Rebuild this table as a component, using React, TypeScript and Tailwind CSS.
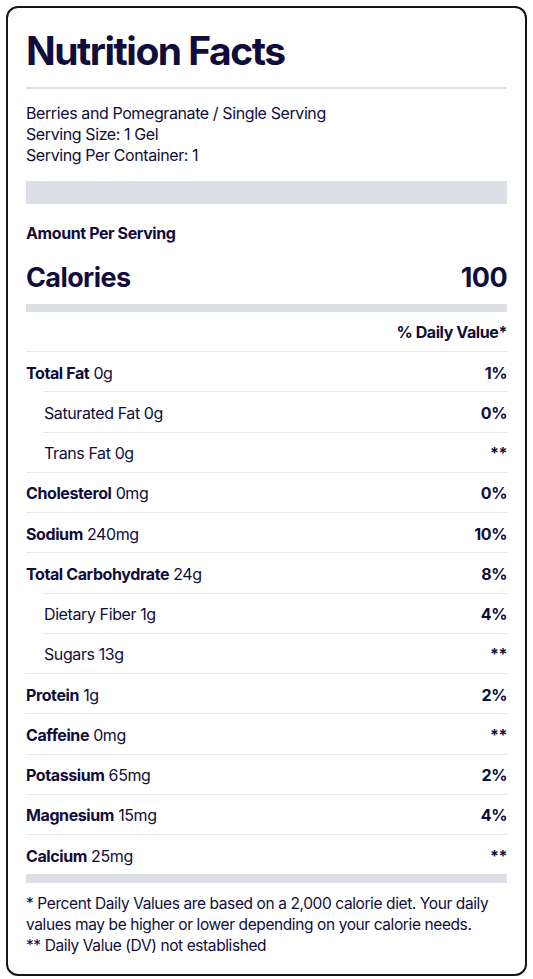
const rows: { label: string; amount: string; dv: string; sub?: boolean }[] = [
  { label: 'Total Fat', amount: '0g', dv: '1%' },
  { label: 'Saturated Fat', amount: '0g', dv: '0%', sub: true },
  { label: 'Trans Fat', amount: '0g', dv: '**', sub: true },
  { label: 'Cholesterol', amount: '0mg', dv: '0%' },
  { label: 'Sodium', amount: '240mg', dv: '10%' },
  { label: 'Total Carbohydrate', amount: '24g', dv: '8%' },
  { label: 'Dietary Fiber', amount: '1g', dv: '4%', sub: true },
  { label: 'Sugars', amount: '13g', dv: '**', sub: true },
  { label: 'Protein', amount: '1g', dv: '2%' },
  { label: 'Caffeine', amount: '0mg', dv: '**' },
  { label: 'Potassium', amount: '65mg', dv: '2%' },
  { label: 'Magnesium', amount: '15mg', dv: '4%' },
  { label: 'Calcium', amount: '25mg', dv: '**' },
];

export default function App() {
  return (
    <div className="bg-white p-[6px] font-['Inter',sans-serif] tracking-[-0.4px] text-[#100d3c]">
      <div className="rounded-[12px] border-2 border-[#161616] px-[18px] pt-[19px] pb-[18px]">
        <h1 className="text-[39px] font-bold leading-[48px] tracking-[-1.5px]">Nutrition Facts</h1>
        <div className="mt-[12px] h-[2px] bg-[#dcdfe6]" />
        <div className="mt-[14px] text-[16px] leading-[21px]">
          <p>Berries and Pomegranate / Single Serving</p>
          <p>Serving Size: 1 Gel</p>
          <p>Serving Per Container: 1</p>
        </div>
        <div className="mt-[15px] h-[23px] bg-[#dcdfe6]" />
        <p className="mt-[19px] text-[16px] font-bold leading-[21px]">Amount Per Serving</p>
        <div className="mt-[17px] flex items-center justify-between text-[27px] font-bold leading-[34px] tracking-[-0.6px]">
          <span>Calories</span>
          <span>100</span>
        </div>
        <div className="mt-[9px] h-[8px] bg-[#dcdfe6]" />
        <div className="flex h-[39px] items-center justify-end text-[16px] font-bold">% Daily Value*</div>
        {rows.map((r) => (
          <div
            key={r.label}
            className={`flex h-[40.25px] items-center justify-between border-t-[1.5px] border-[#e6e8ed] pt-[2px] text-[16px] ${
              r.sub ? 'ml-[17px] pl-[1px]' : ''
            }`}
          >
            <span>
              {r.sub ? r.label : <span className="font-bold">{r.label}</span>} {r.amount}
            </span>
            <span className="font-bold">{r.dv}</span>
          </div>
        ))}
        <div className="h-[9px] bg-[#dcdfe6]" />
        <div className="mt-[10px] text-[15.5px] leading-[21px]">
          <p>* Percent Daily Values are based on a 2,000 calorie diet. Your daily values may be higher or lower depending on your calorie needs.</p>
          <p>** Daily Value (DV) not established</p>
        </div>
      </div>
    </div>
  );
}
